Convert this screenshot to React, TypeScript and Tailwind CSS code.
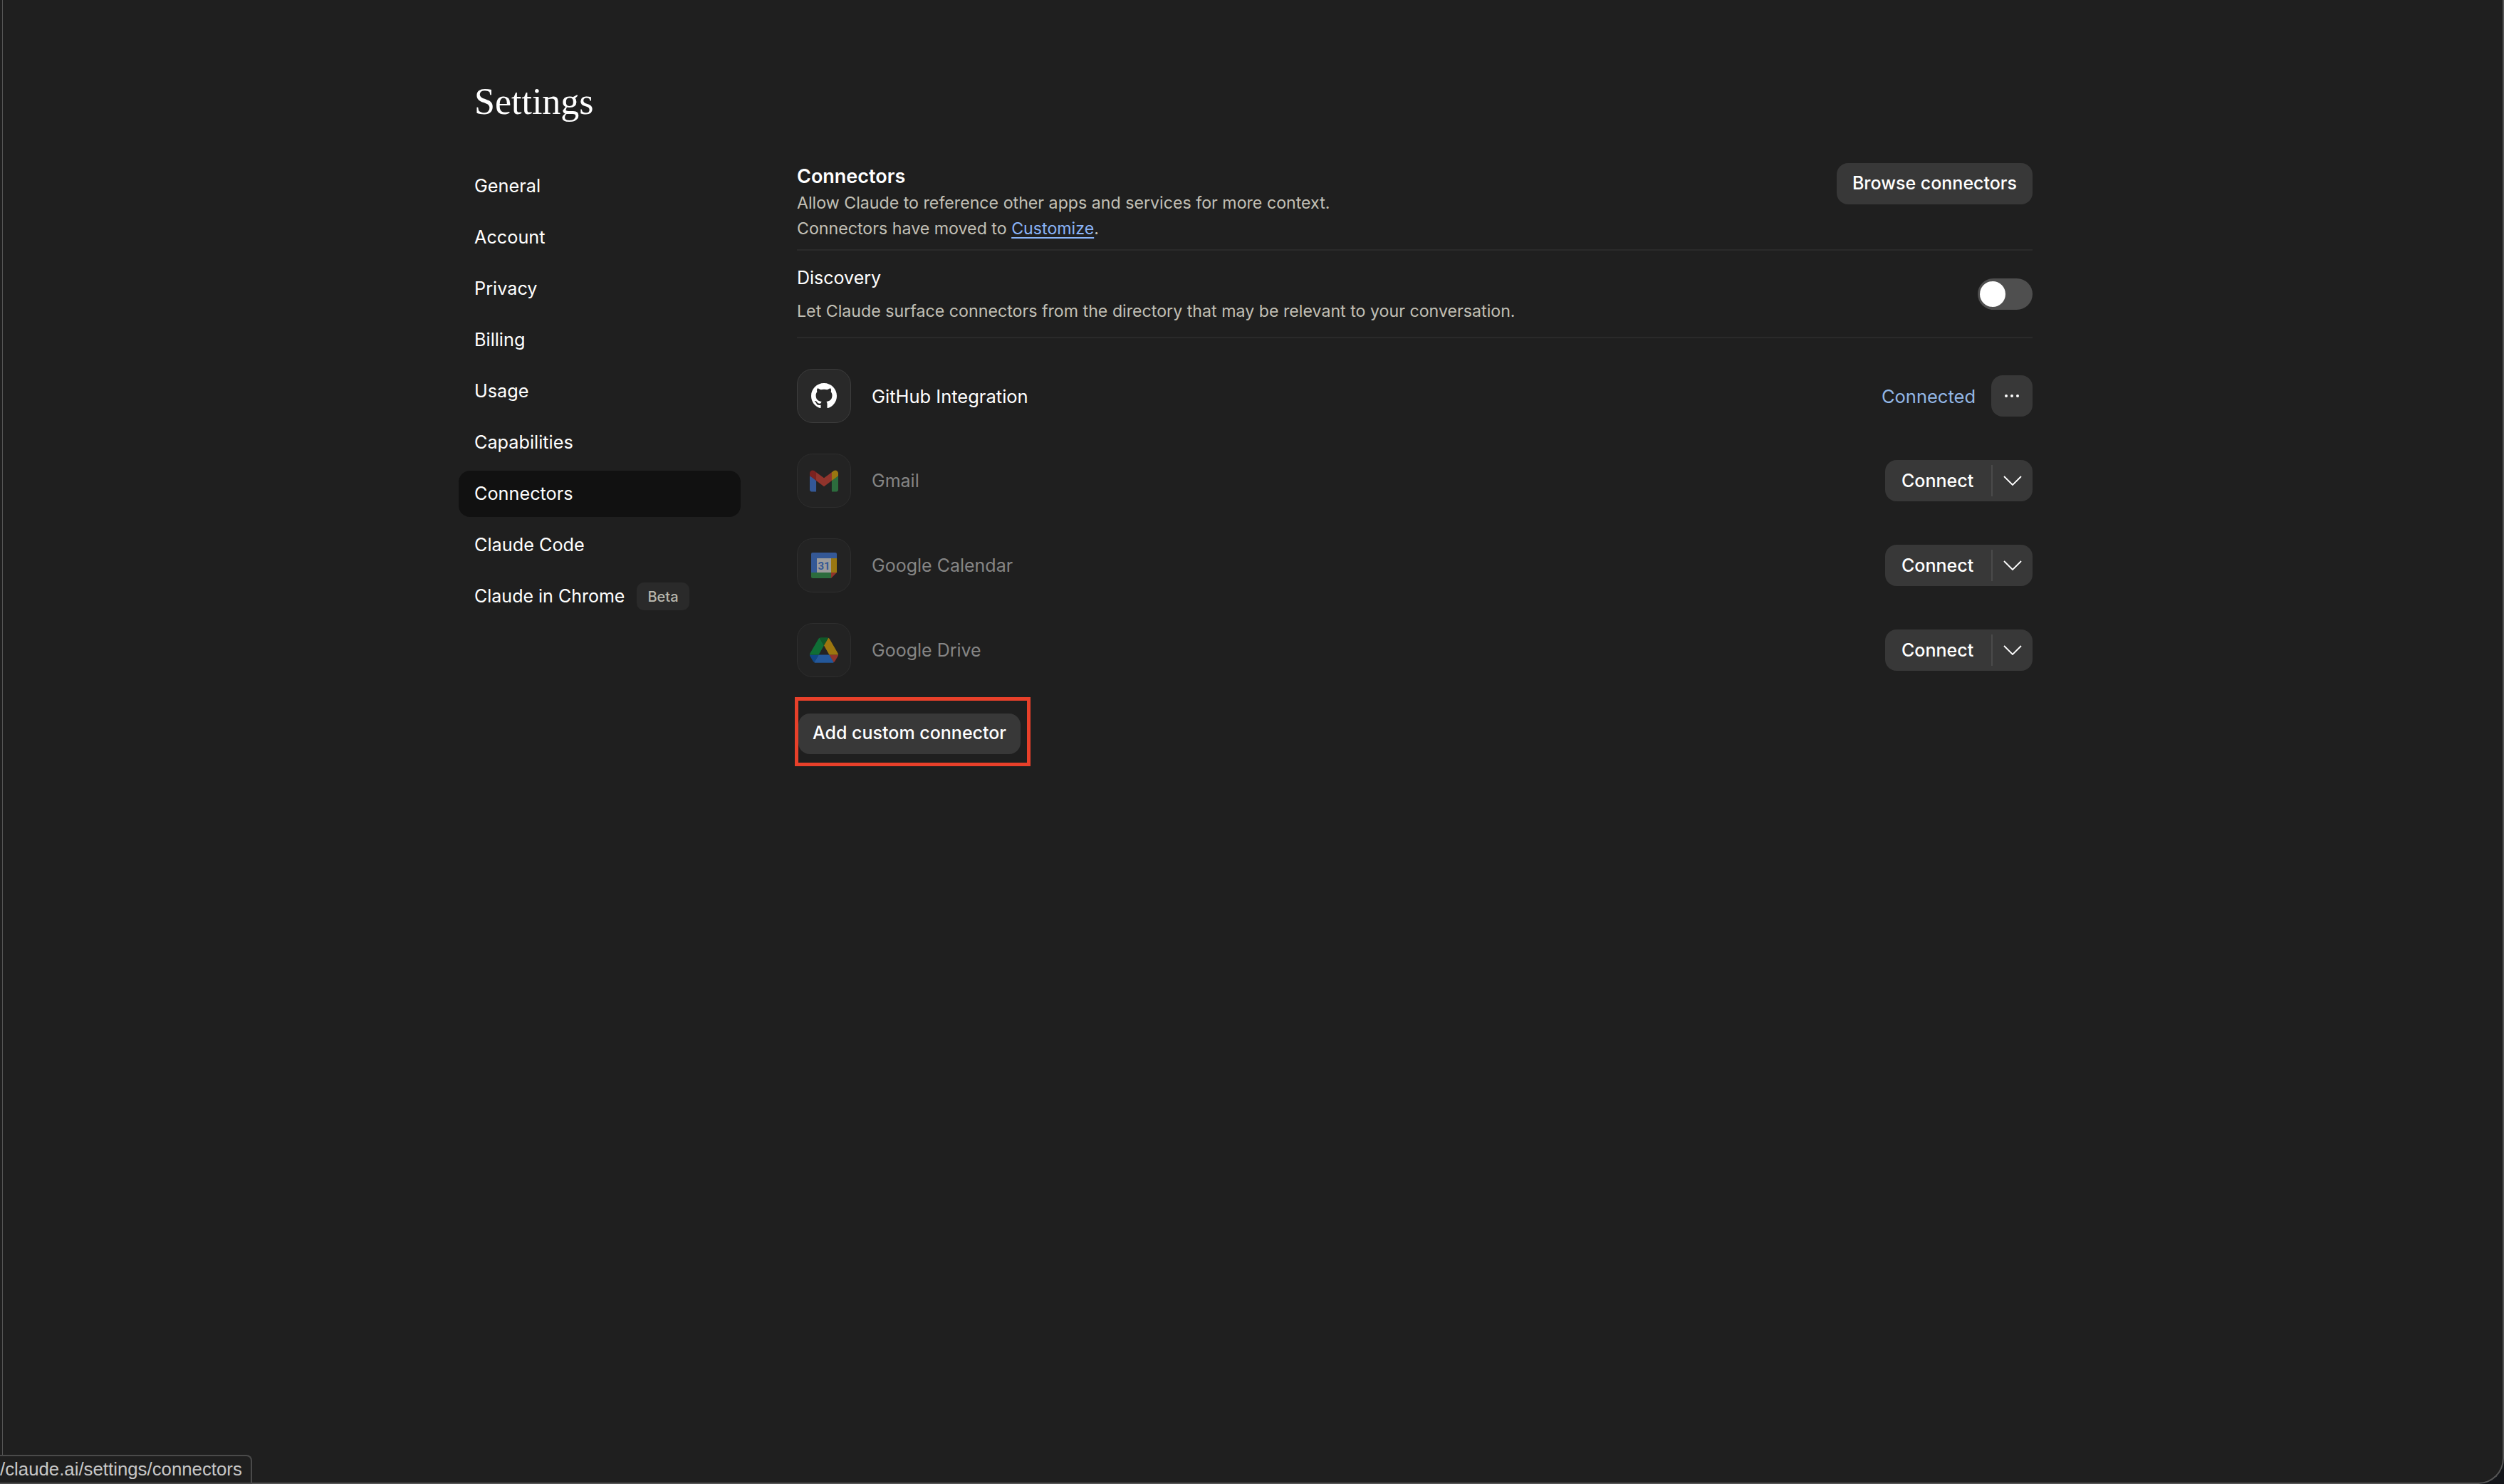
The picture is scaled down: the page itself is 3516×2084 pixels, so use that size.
import React from "react";

const sans = "font-['Inter',sans-serif]";

const navItems = ["General", "Account", "Privacy", "Billing", "Usage", "Capabilities", "Connectors", "Claude Code"];

const GithubIcon = () => (
	<svg viewBox="0 0 16 16" className="w-[36px] h-[36px]" fill="#ffffff">
		<path d="M8 0C3.58 0 0 3.58 0 8c0 3.54 2.29 6.53 5.47 7.59.4.07.55-.17.55-.38 0-.19-.01-.82-.01-1.49-2.01.37-2.53-.49-2.69-.94-.09-.23-.48-.94-.82-1.13-.28-.15-.68-.52-.01-.53.63-.01 1.08.58 1.23.82.72 1.21 1.87.87 2.33.66.07-.52.28-.87.51-1.07-1.78-.2-3.64-.89-3.64-3.95 0-.87.31-1.59.82-2.15-.08-.2-.36-1.02.08-2.12 0 0 .67-.21 2.2.82.64-.18 1.32-.27 2-.27.68 0 1.36.09 2 .27 1.53-1.04 2.2-.82 2.2-.82.44 1.1.16 1.92.08 2.12.51.56.82 1.27.82 2.15 0 3.07-1.87 3.75-3.65 3.95.29.25.54.73.54 1.48 0 1.07-.01 1.93-.01 2.2 0 .21.15.46.55.38A8.013 8.013 0 0016 8c0-4.42-3.58-8-8-8z" />
	</svg>
);

const GmailIcon = () => (
	<svg viewBox="0 0 256 193" className="w-[40px] h-[31px] opacity-55">
		<path fill="#4285F4" d="M58.182 192.05V93.14L27.507 65.077 0 49.504v125.091c0 9.658 7.825 17.455 17.455 17.455h40.727Z" />
		<path fill="#34A853" d="M197.818 192.05h40.727c9.659 0 17.455-7.826 17.455-17.455V49.505l-31.156 17.837-27.026 25.798v98.91Z" />
		<path fill="#EA4335" d="m58.182 93.14-4.174-38.647 4.174-36.989L128 69.868l69.818-52.364 4.669 34.992-4.669 40.644L128 145.504z" />
		<path fill="#FBBC04" d="M197.818 17.504V93.14L256 49.504V26.231c0-21.585-24.64-33.89-41.89-20.945l-16.292 12.218Z" />
		<path fill="#C5221F" d="M0 49.504l26.759 20.07L58.182 93.14V17.504L41.89 5.286C24.61-7.66 0 4.646 0 26.23v23.273Z" />
	</svg>
);

const CalendarIcon = () => (
	<svg viewBox="0 0 36 36" className="w-[36px] h-[36px] opacity-55">
		<path fill="#4285F4" d="M2 0h26v8H8v20H0V2a2 2 0 0 1 2-2z" />
		<path fill="#4285F4" d="M28 0h6a2 2 0 0 1 2 2v6h-8z" />
		<path fill="#FBBC04" d="M28 8h8v20h-8z" />
		<path fill="#34A853" d="M0 28h28v8H2a2 2 0 0 1-2-2z" />
		<path fill="#EA4335" d="M28 36v-8h8z" />
		<path fill="#ffffff" d="M8 8h20v20H8z" />
		<text x="18" y="24" textAnchor="middle" fontSize="15" fontWeight="700" fontFamily="Roboto, sans-serif" fill="#4285F4">31</text>
	</svg>
);

const DriveIcon = () => (
	<svg viewBox="0 0 87.3 78" className="w-[40px] h-[36px] opacity-55">
		<path fill="#0066da" d="m6.6 66.85 3.85 6.65c.8 1.4 1.95 2.5 3.3 3.3l13.75-23.8h-27.5c0 1.55.4 3.1 1.2 4.5z" />
		<path fill="#00ac47" d="m43.65 25-13.75-23.8c-1.35.8-2.5 1.9-3.3 3.3l-25.4 44a9.06 9.06 0 0 0 -1.2 4.5h27.5z" />
		<path fill="#ea4335" d="m73.55 76.8c1.35-.8 2.5-1.9 3.3-3.3l1.6-2.75 7.65-13.25c.8-1.4 1.2-2.95 1.2-4.5h-27.502l5.852 11.5z" />
		<path fill="#00832d" d="m43.65 25 13.75-23.8c-1.35-.8-2.9-1.2-4.5-1.2h-18.5c-1.6 0-3.15.45-4.5 1.2z" />
		<path fill="#2684fc" d="m59.8 53h-32.3l-13.75 23.8c1.35.8 2.9 1.2 4.5 1.2h50.8c1.6 0 3.15-.45 4.5-1.2z" />
		<path fill="#ffba00" d="m73.4 26.5-12.7-22c-.8-1.4-1.95-2.5-3.3-3.3l-13.75 23.8 16.15 28h27.45c0-1.55-.4-3.1-1.2-4.5z" />
	</svg>
);

const ConnectButton = () => (
	<div className="flex items-center h-[58px] w-[207px] rounded-[16px] bg-[#383838] text-white text-[25px] font-medium">
		<span className="flex-1 pl-[23px] pt-[2px]">Connect</span>
		<span className="flex items-center justify-center w-[58px] h-[44px] border-l-2 border-[#4a4a4a]">
			<svg viewBox="0 0 26 14" className="w-[26px] h-[14px]" fill="none" stroke="#ffffff" strokeWidth="1.8">
				<path d="M1 1l12 12L25 1" />
			</svg>
		</span>
	</div>
);

const ConnectorRow = ({ icon, name, muted, right }: { icon: React.ReactNode; name: string; muted?: boolean; right: React.ReactNode }) => (
	<div className="flex items-center justify-between h-[76px]">
		<div className="flex items-center gap-[29px]">
			<div className={`flex items-center justify-center w-[76px] h-[76px] rounded-[22px] border ${muted ? "bg-[#232323] border-[#2e2e2e]" : "bg-[#292929] border-[#3d3d3d]"}`}>
				{icon}
			</div>
			<span className={muted ? "pt-[1px] text-[25px] text-[#858585]" : "pt-[2px] text-[25.5px] text-white"}>{name}</span>
		</div>
		{right}
	</div>
);

export default function App() {
	return (
		<div className={`relative h-[2084px] w-[3516px] overflow-hidden bg-[#14161a] ${sans}`}>
			<div className="h-full rounded-br-[36px] border-r-2 border-b-2 border-[#555555] bg-[#1f1f1f] pl-[644px] pr-[660px]">
				<h1 className="pl-[22px] pt-[112px] h-[229px] font-['Liberation_Serif',serif] text-[52px] leading-[62px] text-white">Settings</h1>
				<div className="flex gap-[79px]">
					<nav className="flex w-[396px] flex-col gap-[7px]">
						{navItems.map((item) => (
							<div key={item} className={`flex h-[65px] items-center rounded-[16px] pl-[22px] text-[25.25px] text-white ${item === "Connectors" ? "bg-[#111111]" : ""}`}>
								{item}
							</div>
						))}
						<div className="flex h-[65px] items-center gap-[17px] pl-[22px] text-[25px] text-white">
							Claude in Chrome
							<span className="flex h-[39px] items-center rounded-[10px] bg-[#2a2a2a] px-[15px] text-[20px] font-medium text-[#b8b7ad]">Beta</span>
						</div>
					</nav>
					<main className="flex-1">
						<section className="flex justify-between h-[123px] border-b-2 border-[#2a2a2a]">
							<div>
								<h2 className="text-[27px] leading-[38px] font-semibold text-white">Connectors</h2>
								<p className="text-[23.2px] leading-[36px] text-[#c2c0b6]">Allow Claude to reference other apps and services for more context.</p>
								<p className="text-[23.2px] leading-[36px] text-[#c2c0b6]">
									Connectors have moved to <span className="text-[#8ab4f8] underline underline-offset-4">Customize</span>.
								</p>
							</div>
							<button className="h-[58px] rounded-[16px] bg-[#383838] px-[22px] text-[25px] font-medium text-white">Browse connectors</button>
						</section>
						<section className="flex items-center justify-between h-[123px] border-b-2 border-[#2a2a2a]">
							<div className="pt-[2px]">
								<h3 className="text-[25px] leading-[36px] text-white">Discovery</h3>
								<p className="mt-[11px] text-[23.2px] leading-[36px] text-[#c2c0b6]">Let Claude surface connectors from the directory that may be relevant to your conversation.</p>
							</div>
							<div className="flex h-[44px] w-[77px] items-center rounded-full bg-[#4f4f4f] pl-[3px]">
								<span className="h-[36px] w-[36px] rounded-full bg-white" />
							</div>
						</section>
						<div className="mt-[43px] flex flex-col gap-[43px]">
							<ConnectorRow
								icon={<GithubIcon />}
								name="GitHub Integration"
								right={
									<div className="flex items-center gap-[22px]">
										<span className="pt-[2px] text-[25.5px] text-[#93b7e6]">Connected</span>
										<button className="flex h-[58px] w-[58px] items-center justify-center gap-[4px] rounded-[16px] bg-[#383838]">
											<span className="h-[4px] w-[4px] rounded-full bg-white" />
											<span className="h-[4px] w-[4px] rounded-full bg-white" />
											<span className="h-[4px] w-[4px] rounded-full bg-white" />
										</button>
									</div>
								}
							/>
							<ConnectorRow muted icon={<GmailIcon />} name="Gmail" right={<ConnectButton />} />
							<ConnectorRow muted icon={<CalendarIcon />} name="Google Calendar" right={<ConnectButton />} />
							<ConnectorRow muted icon={<DriveIcon />} name="Google Drive" right={<ConnectButton />} />
						</div>
						<div className="relative mt-[51px] w-fit">
							<button className="ml-[2px] h-[57px] rounded-[16px] bg-[#383838] px-[20px] pb-[2px] text-[25px] font-medium text-white">Add custom connector</button>
							<span className="pointer-events-none absolute -top-[23px] -bottom-[17px] -left-[3px] -right-[14px] border-[5px] border-[#e8402a]" />
						</div>
					</main>
				</div>
			</div>
			<span className="absolute top-0 bottom-0 left-[3px] w-px bg-[#555555]" />
			<div className="absolute bottom-0 left-0 flex h-[41px] w-[354px] items-center rounded-tr-[8px] border-t-2 border-r-2 border-b-2 border-[#4a4a4a] bg-[#1f1f1f] font-['Liberation_Sans',sans-serif] text-[25.8px] text-[#c8c8c8]">
				/claude.ai/settings/connectors
			</div>
		</div>
	);
}
